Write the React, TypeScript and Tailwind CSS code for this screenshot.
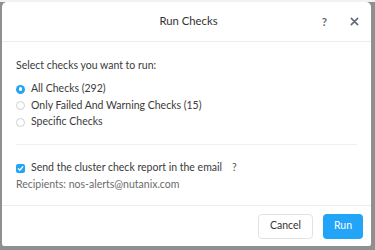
import React from "react";

export default function App() {
  const font = { fontFamily: "Lato, 'Open Sans', 'Liberation Sans', sans-serif" };
  return (
    <div className="w-[375px] h-[250px] bg-[#8f8f8f] flex flex-col pl-[2px] pr-[4px] pb-[4px] overflow-hidden" style={font}>
      <div className="h-[2px] bg-[#f2f2f2] -ml-[2px] -mr-[4px] shrink-0" />
      <div className="flex-1 bg-white rounded-t-[5px] rounded-b-[2px] flex flex-col text-[#3a3a3a]">
        {/* Header */}
        <div className="h-[40px] flex items-center relative border-b border-[#ececec] shrink-0">
          <div className="flex-1 text-center text-[11.3px] text-[#333] pl-[4px]">Run Checks</div>
          <div className="absolute right-[12px] top-0 h-full flex items-center gap-[23px] text-[#555]">
            <span className="text-[11.5px] font-bold text-[#5f6b78]">?</span>
            <svg width="9" height="9" viewBox="0 0 10 10" className="text-[#5f6b78]">
              <path d="M1.5 1.5 L8.5 8.5 M8.5 1.5 L1.5 8.5" stroke="currentColor" strokeWidth="1.8" strokeLinecap="round" />
            </svg>
          </div>
        </div>
        {/* Body */}
        <div className="pl-[14px] pr-[14px] pt-[16px] text-[10.5px]">
          <div className="leading-[14px]">Select checks you want to run:</div>
          <div className="mt-[10px] flex flex-col gap-[2.5px]">
            {[
              { label: "All Checks (292)", on: true },
              { label: "Only Failed And Warning Checks (15)", on: false },
              { label: "Specific Checks", on: false },
            ].map((r) => (
              <div key={r.label} className="flex items-center h-[14px]">
                {r.on ? (
                  <span className="w-[9px] h-[9px] rounded-full bg-[#22a5f7] flex items-center justify-center shrink-0">
                    <span className="w-[3.5px] h-[3.5px] rounded-full bg-white" />
                  </span>
                ) : (
                  <span className="w-[9px] h-[9px] rounded-full border border-[#cfcfcf] bg-white shrink-0" />
                )}
                <span className="ml-[6px]">{r.label}</span>
              </div>
            ))}
          </div>
          <div className="mt-[15px] border-t border-[#f0f0f0]" />
          <div className="mt-[16px] flex items-center h-[14px]">
            <span className="w-[9px] h-[9px] rounded-[2px] bg-[#22a5f7] flex items-center justify-center shrink-0">
              <svg width="7" height="7" viewBox="0 0 8 8">
                <path d="M1.4 4.2 L3.2 6 L6.6 2" stroke="white" strokeWidth="1.4" fill="none" strokeLinecap="round" strokeLinejoin="round" />
              </svg>
            </span>
            <span className="ml-[6px]">Send the cluster check report in the email</span>
            <span className="ml-[10px] text-[#555]">?</span>
          </div>
          <div className="mt-[2px] leading-[14px] text-[#6b6b6b]">Recipients: nos-alerts@nutanix.com</div>
        </div>
        <div className="mt-auto border-t border-[#ececec] h-[41px] flex items-center justify-end gap-[10px] pr-[8px] shrink-0">
          <button className="h-[25px] w-[55px] rounded-[4px] border border-[#e2e2e2] bg-white text-[10.5px] text-[#333]">Cancel</button>
          <button className="h-[25px] w-[40px] rounded-[4px] bg-[#22a5f7] text-[10.5px] text-white">Run</button>
        </div>
      </div>
    </div>
  );
}
